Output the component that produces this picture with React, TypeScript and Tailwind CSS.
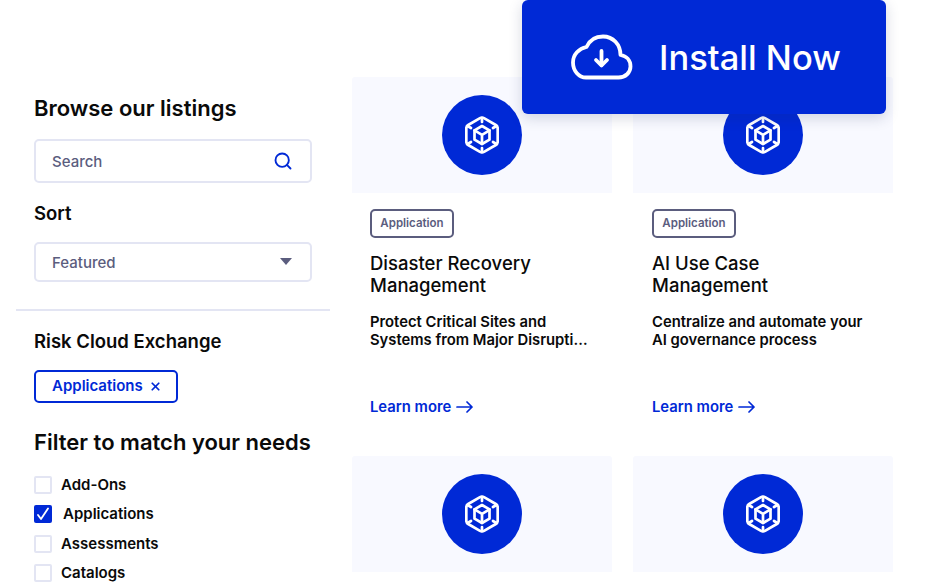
import { Search, X } from "lucide-react";

const BLUE = "#0029d6";

function CubeIcon() {
  return (
    <svg width="34" height="38" viewBox="0 0 34 38" fill="none" stroke="white" strokeWidth="2.700" strokeLinecap="round" strokeLinejoin="round">
      {/* outer hexagon */}
      <path d="M15 2.200 3.200 9C2 9.700 1.300 10.900 1.300 12.300V25.700C1.300 27.100 2 28.300 3.200 29L15 35.800C16.200 36.500 17.800 36.500 19 35.800L30.800 29C32 28.300 32.700 27.100 32.700 25.700V12.300C32.700 10.900 32 9.700 30.800 9L19 2.200C17.800 1.500 16.200 1.500 15 2.200Z" />
      {/* ticks pointing in */}
      <path d="M17 2V6M17 32V36M2.500 10 6 12M31.500 10 28 12M2.500 28 6 26M31.500 28 28 26" />
      {/* inner cube */}
      <path d="M17 10 24.500 14.300V23.700L17 28 9.500 23.700V14.300Z" />
      <path d="M9.500 14.300 17 18.800 24.500 14.300M17 18.800V28" />
    </svg>
  );
}

function CloudDownloadIcon() {
  return (
    <svg width="62" height="46" viewBox="0 0 62 46" fill="none">
      <path
        d="M15 43.500H47.500C54.500 43.500 59.500 38.500 59.500 32.500C59.500 26.500 55.500 22 49.500 21C49.500 10.500 42 2.500 32 2.500C24.500 2.500 18.500 6.500 15.500 13C8 14.500 2 20.500 2 28.500C2 37 8 43.500 15 43.500Z"
        stroke="white"
        strokeWidth="3.800"
        strokeLinejoin="round"
      />
      <path d="M30.500 17V31" stroke="white" strokeWidth="3.800" strokeLinecap="round" />
      <path d="M25 26 30.500 31.500 36 26" stroke="white" strokeWidth="3.800" strokeLinecap="round" strokeLinejoin="round" />
    </svg>
  );
}

function LongArrow() {
  return (
    <svg width="17" height="12" viewBox="0 0 17 12" fill="none" stroke="#0029d6" strokeWidth="1.700" strokeLinecap="round" strokeLinejoin="round">
      <path d="M1 6H16M11 1l5 5-5 5" />
    </svg>
  );
}

function Card({ title, body, padClass }: { title?: string[]; body?: string[]; padClass?: string }) {
  return (
    <div className="w-[260px]">
      <div className="h-[116.300px] bg-[#f8f9ff] flex items-center justify-center rounded-t-[3px]">
        <div className="w-[80.500px] h-[80.500px] rounded-full bg-[#0029d6] flex items-center justify-center">
          <CubeIcon />
        </div>
      </div>
      {title && body && (
        <div className={`${padClass} pt-[15.700px] h-[262.700px]`}>
          <span className="inline-flex h-[29px] w-[84px] items-center justify-center rounded-[5px] border-2 border-[#5b5d7e] text-[11.500px] font-semibold text-[#5b5d7e]">
            Application
          </span>
          <h3 className="mt-[14px] text-[18.500px] leading-[22px] font-medium text-[#0a0a0a]">
            {title[0]}
            <br />
            {title[1]}
          </h3>
          <p className="mt-[17px] text-[14.800px] leading-[18px] font-semibold text-[#0a0a0a]">
            {body[0]}
            <br />
            {body[1]}
          </p>
          <a className="mt-[49px] flex items-center gap-[5px] text-[14.800px] leading-[18px] font-semibold text-[#0029d6]">
            Learn more
            <LongArrow />
          </a>
        </div>
      )}
    </div>
  );
}

function FilterRow({ label, checked }: { label: string; checked?: boolean }) {
  return (
    <label className="flex items-center h-[18px] text-[15px] font-semibold text-[#0a0a0a]">
      {checked ? (
        <span className="w-[18px] h-[18px] rounded-[2px] bg-[#0029d6] flex items-center justify-center mr-[11px]">
          <svg width="14" height="14" viewBox="0 0 14 14" fill="none" stroke="white" strokeWidth="1.800" strokeLinecap="round" strokeLinejoin="round">
            <path d="M2 8 5 12 12 1.500" />
          </svg>
        </span>
      ) : (
        <span className="w-[18px] h-[18px] rounded-[2px] border-2 border-[#e3e5f3] bg-white mr-[9px]" />
      )}
      {label}
    </label>
  );
}

export default function App() {
  return (
    <div className="relative w-[932px] h-[584px] overflow-hidden bg-white flex font-['Inter',sans-serif]">
      <aside className="w-[314px] ml-[16px] shrink-0 pt-[96px]">
        <div className="px-[18px]">
          <h2 className="text-[22px] leading-[24px] font-semibold text-[#0a0a0a]">Browse our listings</h2>
          <div className="mt-[19px] h-[44px] rounded-[5px] border-2 border-[#e3e5f3] flex items-center justify-between pl-[16px] pr-[17px]">
            <span className="pt-[2px] text-[15px] font-medium text-[#5b5d7e]">Search</span>
            <Search size={20} color={BLUE} strokeWidth={2.25} />
          </div>
          <h3 className="mt-[19px] text-[18.500px] leading-[22px] font-semibold text-[#0a0a0a]">Sort</h3>
          <div className="mt-[18px] h-[40px] rounded-[5px] border-2 border-[#e3e5f3] flex items-center justify-between pl-[16px] pr-[17px]">
            <span className="pt-[2px] text-[15px] font-medium text-[#5b5d7e]">Featured</span>
            <span className="w-0 h-0 -mt-[2px] border-x-[6.500px] border-x-transparent border-t-[7px] border-t-[#5b5d7e] -translate-x-[1px]" />
          </div>
        </div>
        <div className="mt-[27px] h-[2px] bg-[#e3e5f3]" />
        <div className="px-[18px]">
          <h3 className="mt-[19px] text-[18.500px] leading-[22px] font-semibold text-[#0a0a0a]">Risk Cloud Exchange</h3>
          <div className="mt-[18px] w-[144px] h-[33px] rounded-[5px] border-2 border-[#0029d6] flex items-center pl-[16px] gap-[6px] text-[15px] font-semibold text-[#0029d6]">
            <span>Applications</span>
            <X size={13} strokeWidth={3.25} />
          </div>
          <h2 className="mt-[27px] text-[22px] leading-[24px] font-semibold text-[#0a0a0a]">Filter to match your needs</h2>
          <div className="mt-[22px] flex flex-col gap-[11.400px]">
            <FilterRow label="Add-Ons" />
            <FilterRow label="Applications" checked />
            <FilterRow label="Assessments" />
            <FilterRow label="Catalogs" />
          </div>
        </div>
      </aside>
      <main className="ml-[22px] pt-[77px] grid grid-cols-[260px_260px] gap-x-[21px] content-start">
        <Card padClass="pl-[18px]" title={["Disaster Recovery", "Management"]} body={["Protect Critical Sites and", "Systems from Major Disrupti…"]} />
        <Card padClass="pl-[19px]" title={["AI Use Case", "Management"]} body={["Centralize and automate your", "AI governance process"]} />
        <Card />
        <Card />
      </main>
      <div className="absolute left-[522px] top-0 w-[364px] h-[113.500px] rounded-[6px] bg-[#0029d6] shadow-[0_4px_14px_rgba(30,40,90,0.18)] flex items-center pl-[49px] gap-[26px]">
        <CloudDownloadIcon />
        <span className="mt-[2px] text-[34.500px] font-medium text-white">Install Now</span>
      </div>
    </div>
  );
}
